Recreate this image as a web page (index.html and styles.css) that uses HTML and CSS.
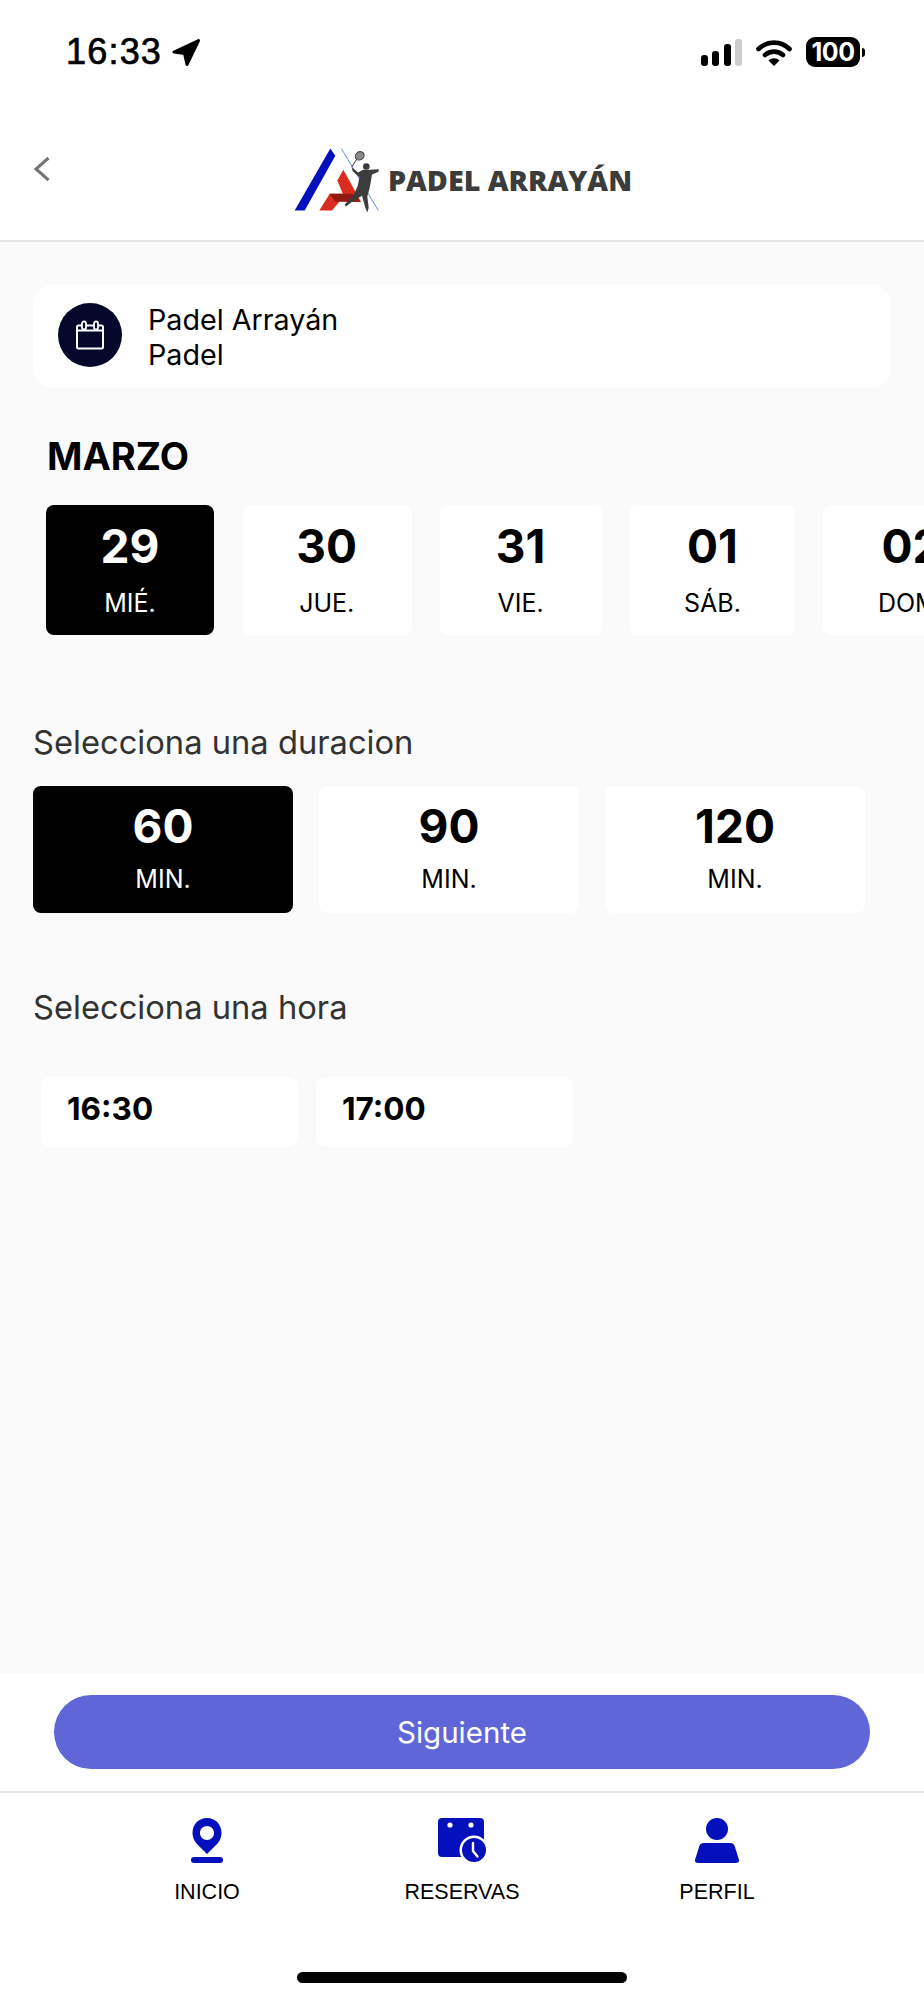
FILE: index.html
```html
<!DOCTYPE html>
<html>
<head>
  <title>Padel Arrayán</title>
  <link rel="stylesheet" href="styles.css">
</head>
<body>
  <div class="status-bar">
    <div class="status-left">
      <span class="clock">16:33</span>
      <svg class="arrow" viewBox="0 0 28 27"><path d="M26.5 1.5 L2 13 L12.5 14.5 L15 25.5 Z" fill="#000" stroke="#000" stroke-width="3" stroke-linejoin="round"/></svg>
    </div>
    <div class="status-right">
      <div class="signal">
        <span class="bar bar1"></span>
        <span class="bar bar2"></span>
        <span class="bar bar3"></span>
        <span class="bar bar4"></span>
      </div>
      <svg class="wifi" viewBox="0 0 36 27">
        <path d="M2.5 10 C11 1.5 25 1.5 33.5 10" fill="none" stroke="#000" stroke-width="4.6" stroke-linecap="round"/>
        <path d="M9 16 C14 11.5 22 11.5 27 16" fill="none" stroke="#000" stroke-width="4.6" stroke-linecap="round"/>
        <path d="M12.5 21.5 C16 18.5 20 18.5 23.5 21.5 L18 27 Z" fill="#000"/>
      </svg>
      <div class="battery">100</div>
      <span class="battery-nub"></span>
    </div>
  </div>

  <header class="header">
    <svg class="back" viewBox="0 0 18 26"><path d="M15.5 2 L3 13 L15.5 24" fill="none" stroke="#757575" stroke-width="3"/></svg>
    <div class="logo">
      <svg class="logo-mark" viewBox="70 50 270 200">
        <polygon points="185,54 200,76 108,240 78,240" fill="#0410bc"/>
        <line x1="218" y1="54" x2="329" y2="240" stroke="#4a78e0" stroke-width="2.5"/>
        <polygon points="224,118 277,214 232,214 206,150" fill="#d92d20"/>
        <polygon points="183,190 232,190 190,240 152,240" fill="#d92d20"/>
        <polygon points="183,190 250,190 277,214 200,214" fill="#8e1a12"/>
        <ellipse cx="273" cy="76" rx="14" ry="12" fill="#8a8a8a" stroke="#3c3c3c" stroke-width="3" transform="rotate(-35 273 76)"/>
        <line x1="264" y1="86" x2="249" y2="110" stroke="#3c3c3c" stroke-width="3"/>
        <circle cx="293" cy="108" r="10" fill="#3c3c3c"/>
        <path d="M249 110 L268 126 L283 118 L305 118 L330 116 L330 124 L310 132 L304 168 L296 198 L300 232 L296 246 L290 232 L280 196 L250 214 L232 228 L228 222 L254 196 L268 164 L272 140 L252 122 Z" fill="#3c3c3c"/>
      </svg>
      <span class="logo-text">PADEL ARRAYÁN</span>
    </div>
  </header>

  <main class="content">
    <div class="club-card">
      <div class="club-icon">
        <svg viewBox="0 0 30 30" width="30" height="30">
          <rect x="2" y="10.5" width="26" height="18" rx="1.5" fill="none" stroke="#fff" stroke-width="2"/>
          <path d="M2 11 V7 Q2 5.5 3.5 5.5 H26.5 Q28 5.5 28 7 V11" fill="none" stroke="#fff" stroke-width="2"/>
          <rect x="7" y="1.5" width="4" height="8" rx="2" fill="#05082a" stroke="#fff" stroke-width="1.8"/>
          <rect x="19" y="1.5" width="4" height="8" rx="2" fill="#05082a" stroke="#fff" stroke-width="1.8"/>
        </svg>
      </div>
      <div class="club-text">
        <div>Padel Arrayán</div>
        <div>Padel</div>
      </div>
    </div>

    <h2 class="month">MARZO</h2>
    <div class="days">
      <div class="day selected"><div class="big">29</div><div class="small">MIÉ.</div></div>
      <div class="day"><div class="big">30</div><div class="small">JUE.</div></div>
      <div class="day"><div class="big">31</div><div class="small">VIE.</div></div>
      <div class="day"><div class="big">01</div><div class="small">SÁB.</div></div>
      <div class="day"><div class="big">02</div><div class="small">DOM.</div></div>
    </div>

    <p class="section-title title-duration">Selecciona una duracion</p>
    <div class="durations">
      <div class="duration selected"><div class="big">60</div><div class="small">MIN.</div></div>
      <div class="duration"><div class="big">90</div><div class="small">MIN.</div></div>
      <div class="duration"><div class="big">120</div><div class="small">MIN.</div></div>
    </div>

    <p class="section-title title-hour">Selecciona una hora</p>
    <div class="hours">
      <div class="hour">16:30</div>
      <div class="hour">17:00</div>
    </div>
  </main>

  <div class="action">
    <button class="next" type="button">Siguiente</button>
  </div>

  <nav class="tabs">
    <div class="tab">
      <svg viewBox="0 0 32 45" width="32" height="45">
        <path fill-rule="evenodd" d="M16 0 C24.5 0 30.5 6.5 30.5 15 C30.5 19 29 22 27 25 L16 36 L5 25 C3 22 1.5 19 1.5 15 C1.5 6.5 7.5 0 16 0 Z M16 8 C12 8 9 11 9 15 C9 19 12 22 16 22 C20 22 23 19 23 15 C23 11 20 8 16 8 Z" fill="#0410bc"/>
        <rect x="0" y="39" width="32" height="6" rx="3" fill="#0410bc"/>
      </svg>
      <span>INICIO</span>
    </div>
    <div class="tab">
      <svg viewBox="0 0 48 45" width="48" height="45">
        <path d="M4 0 H42 Q46 0 46 4 V39 H4 Q0 39 0 35 V4 Q0 0 4 0 Z" fill="#0410bc"/>
        <circle cx="12" cy="7" r="2.6" fill="#fff"/>
        <circle cx="33" cy="7" r="2.6" fill="#fff"/>
        <circle cx="36" cy="32" r="14.5" fill="#fff"/>
        <circle cx="36" cy="32" r="12" fill="#0410bc"/>
        <path d="M35 25 V33 L39.5 38.5" fill="none" stroke="#fff" stroke-width="2.4" stroke-linecap="round" stroke-linejoin="round"/>
      </svg>
      <span>RESERVAS</span>
    </div>
    <div class="tab">
      <svg viewBox="0 0 44 45" width="44" height="45">
        <ellipse cx="22" cy="11" rx="11" ry="11" fill="#0410bc"/>
        <path d="M9 25 H35 Q39 25 40 29 L44 42 Q44.5 45 41 45 H3 Q-0.5 45 0 42 L4 29 Q5 25 9 25 Z" fill="#0410bc"/>
      </svg>
      <span>PERFIL</span>
    </div>
  </nav>

  <div class="home-area"><span class="home-indicator"></span></div>
</body>
</html>
```

FILE: styles.css
```css
* { box-sizing: border-box; }
body {
  margin: 0;
  width: 924px;
  height: 2000px;
  overflow: hidden;
  display: flex;
  flex-direction: column;
  background: #fff;
  font-family: Inter, "Liberation Sans", sans-serif;
  color: #000;
}

/* status bar */
.status-bar {
  height: 103px;
  flex: none;
  display: flex;
  justify-content: space-between;
  align-items: flex-start;
  padding: 32px 59px 0 66px;
}
.status-left { display: flex; align-items: center; gap: 10px; }
.clock {
  font-family: "Liberation Sans", Arial, sans-serif;
  font-size: 36px;
  line-height: 40px;
  letter-spacing: 1.2px;
  -webkit-text-stroke: 0.7px #000;
}
.arrow { width: 28px; height: 27px; }
.status-right { display: flex; align-items: center; padding-top: 5px; }
.signal { display: flex; align-items: flex-end; gap: 4.5px; height: 27px; margin-right: 14px; }
.bar { display: block; width: 7px; background: #000; border-radius: 3px; }
.bar1 { height: 11px; }
.bar2 { height: 15px; }
.bar3 { height: 22px; }
.bar4 { height: 27px; background: #ccc; }
.wifi { width: 36px; height: 27px; margin-right: 14px; }
.battery {
  width: 54px;
  height: 30px;
  background: #000;
  border-radius: 9px;
  color: #fff;
  font-size: 25px;
  font-weight: 700;
  line-height: 30px;
  text-align: center;
  letter-spacing: -0.5px;
}
.battery-nub { width: 3px; height: 9px; margin-left: 2px; background: #000; border-radius: 0 4px 4px 0; }

/* header */
.header {
  height: 139px;
  flex: none;
  display: grid;
  grid-template-columns: 1fr auto 1fr;
  border-bottom: 2px solid #e5e5e5;
}
.back { width: 18px; height: 26px; margin: 53px 0 0 33px; }
.logo { display: flex; align-items: flex-start; gap: 6px; padding-top: 44px; }
.logo-mark { width: 90px; height: 67px; flex: none; }
.logo-text {
  font-family: "Open Sans", sans-serif;
  font-weight: 800;
  font-size: 28.7px;
  line-height: 28px;
  margin-top: 19px;
  color: #3c3c3c;
  white-space: nowrap;
}

/* content */
.content {
  flex: 1;
  min-height: 0;
  background: #fafafa;
  padding: 43px 0 0 33px;
  overflow: hidden;
}
.club-card {
  width: 858px;
  height: 103px;
  background: #fff;
  border-radius: 20px;
  display: flex;
  align-items: center;
  gap: 26px;
  padding-left: 25px;
}
.club-icon {
  width: 64px;
  height: 64px;
  margin-bottom: 3px;
  border-radius: 50%;
  background: #05082a;
  display: flex;
  align-items: center;
  justify-content: center;
}
.club-text { font-size: 28.7px; line-height: 35px; }
.month {
  margin: 46px 0 0 14px;
  font-size: 38px;
  line-height: 44px;
  font-weight: 650;
}
.days { display: flex; gap: 28px; margin: 27px 0 0 13px; }
.day {
  flex: none;
  min-width: 162px;
  height: 130px;
  padding: 0 54.5px;
  background: #fff;
  border-radius: 8px;
  text-align: center;
}
.big { font-size: 46px; line-height: 52px; font-weight: 650; }
.small { font-size: 25px; line-height: 30px; }
.day .big { margin-top: 15px; }
.day .small { margin-top: 16px; }
.selected { background: #000; color: #fff; }

.section-title { margin: 0; font-size: 32.7px; line-height: 40px; color: #333; }
.title-duration { margin-top: 87px; }
.durations { display: flex; gap: 26px; margin-top: 24px; }
.duration {
  width: 260px;
  height: 127px;
  background: #fff;
  border-radius: 8px;
  text-align: center;
}
.duration.selected { background: #000; }
.duration .big { margin-top: 14px; }
.duration .small { margin-top: 12px; }
.title-hour { margin-top: 74px; }
.hours { display: flex; gap: 18px; margin: 51px 0 0 8px; }
.hour {
  width: 257px;
  height: 68px;
  padding: 13px 0 0 26px;
  background: #fff;
  border-radius: 8px;
  font-size: 31.5px;
  line-height: 36px;
  font-weight: 650;
}

/* bottom */
.action { flex: none; height: 120px; padding: 22px 54px 0; border-bottom: 2px solid #e5e5e5; }
.next {
  display: block;
  width: 816px;
  height: 74px;
  border: 0;
  border-radius: 37px;
  background: #5e66d8;
  color: #fff;
  font-family: Inter, sans-serif;
  font-size: 29.5px;
}
.tabs {
  flex: none;
  height: 144px;
  display: grid;
  grid-template-columns: repeat(3, 200px);
  gap: 55px;
  padding: 25px 0 0 107px;
}
.tab {
  display: flex;
  flex-direction: column;
  align-items: center;
  font-family: "Liberation Sans", Arial, sans-serif;
  font-size: 21.5px;
}
.tab span { margin-top: 16px; line-height: 26px; }
.home-area { flex: none; height: 63px; display: flex; justify-content: center; padding-top: 35px; }
.home-indicator { display: block; width: 330px; height: 11px; background: #000; border-radius: 6px; }
```
